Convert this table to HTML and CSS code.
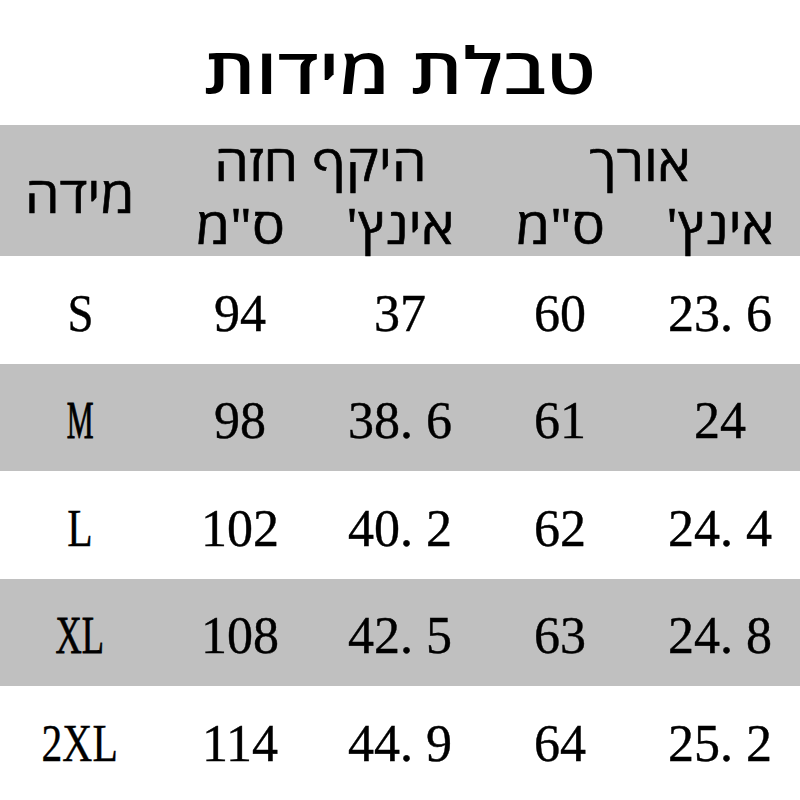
FILE: index.html
```html
<!DOCTYPE html>
<html lang="he" dir="rtl">
<head>
<meta charset="utf-8">
<title>טבלת מידות</title>
<link rel="stylesheet" href="styles.css">
</head>
<body>
<h1 class="title"><span class="stretch">טבלת מידות</span></h1>
<div class="head">
  <div class="group"><span class="stretch">אורך</span></div>
  <div class="group"><span class="stretch">היקף חזה</span></div>
  <div class="size-h"><span class="stretch">מידה</span></div>
  <div class="unit"><span class="stretch">אינץ'</span></div>
  <div class="unit"><span class="stretch">ס"מ</span></div>
  <div class="unit"><span class="stretch">אינץ'</span></div>
  <div class="unit"><span class="stretch">ס"מ</span></div>
</div>
<div class="rows">
  <div class="row">
    <div class="cell">23<span class="dot">.</span>6</div>
    <div class="cell">60</div>
    <div class="cell">37</div>
    <div class="cell">94</div>
    <div class="cell"><span class="sz sz-s">S</span></div>
  </div>
  <div class="row alt">
    <div class="cell">24</div>
    <div class="cell">61</div>
    <div class="cell">38<span class="dot">.</span>6</div>
    <div class="cell">98</div>
    <div class="cell"><span class="sz sz-m">M</span></div>
  </div>
  <div class="row">
    <div class="cell">24<span class="dot">.</span>4</div>
    <div class="cell">62</div>
    <div class="cell">40<span class="dot">.</span>2</div>
    <div class="cell">102</div>
    <div class="cell"><span class="sz sz-l">L</span></div>
  </div>
  <div class="row alt">
    <div class="cell">24<span class="dot">.</span>8</div>
    <div class="cell">63</div>
    <div class="cell">42<span class="dot">.</span>5</div>
    <div class="cell">108</div>
    <div class="cell"><span class="sz sz-xl">XL</span></div>
  </div>
  <div class="row">
    <div class="cell">25<span class="dot">.</span>2</div>
    <div class="cell">64</div>
    <div class="cell">44<span class="dot">.</span>9</div>
    <div class="cell">114</div>
    <div class="cell"><span class="sz sz-2xl" dir="ltr">2XL</span></div>
  </div>
</div>
</body>
</html>
```
FILE: styles.css
```css
html, body {
  margin: 0;
  padding: 0;
  background: #ffffff;
  color: #000000;
}
body {
  width: 800px;
  height: 800px;
  overflow: hidden;
  font-family: "Open Sans", "Liberation Sans", sans-serif;
}
.stretch {
  display: inline-block;
  transform: scaleX(1.1);
}
.title {
  margin: 0;
  height: 125px;
  box-sizing: border-box;
  padding-top: 30px;
  font-size: 64px;
  font-weight: 600;
  line-height: 80px;
  text-align: center;
}
.title .stretch {
  transform: scaleX(1.22);
}
.head {
  background: #c0c0c0;
  display: grid;
  grid-template-columns: repeat(5, 160px);
  grid-template-rows: 63px 61px;
  padding-top: 7px;
  font-size: 50px;
  font-weight: 400;
  line-height: 60px;
  -webkit-text-stroke: 0.6px #000000;
}
.group {
  grid-column: span 2;
  text-align: center;
}
.size-h {
  grid-row: span 2;
  display: flex;
  align-items: center;
  justify-content: center;
}
.unit {
  text-align: center;
}
.rows {
  display: flex;
  flex-direction: column;
}
.row {
  display: grid;
  grid-template-columns: repeat(5, 160px);
  height: 107.5px;
  align-items: center;
  font-family: "Liberation Serif", "Times New Roman", serif;
  font-size: 52px;
  line-height: 1;
  -webkit-text-stroke: 0.4px #000000;
  box-sizing: border-box;
  padding-top: 8px;
}
.alt {
  background: #c0c0c0;
}
.cell {
  text-align: center;
  direction: ltr;
}
.dot {
  display: inline-block;
  width: 0.5em;
  text-align: left;
}
.sz {
  display: inline-block;
}
.sz-s { transform: scaleX(0.9); }
.sz-m { transform: scaleX(0.58); -webkit-text-stroke: 1px #000000; }
.sz-l { transform: scaleX(0.8); }
.sz-xl { transform: scaleX(0.7); -webkit-text-stroke: 0.8px #000000; }
.sz-2xl { transform: scaleX(0.8); }
```
